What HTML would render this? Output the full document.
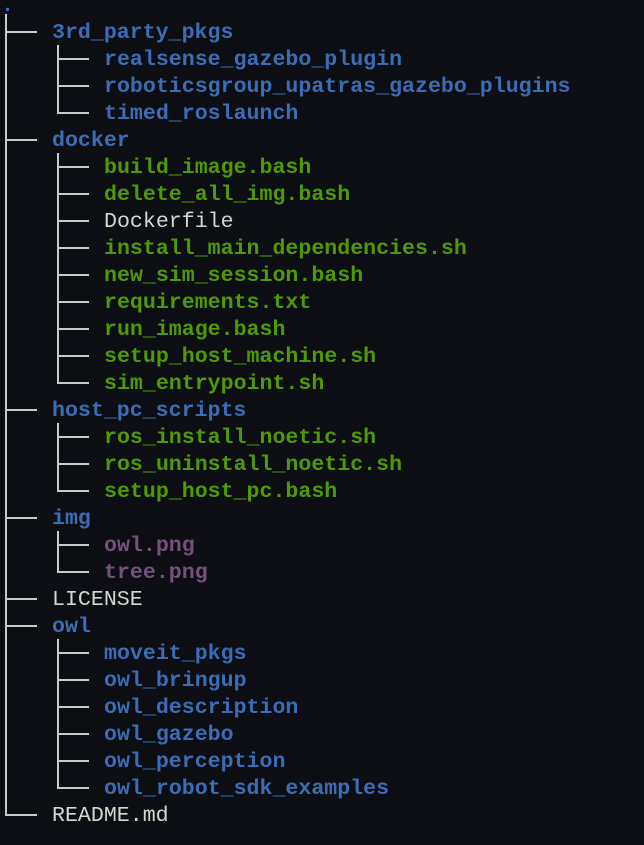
<!DOCTYPE html>
<html><head><meta charset="utf-8"><style>
html,body{margin:0;padding:0;background:#0c0e13;width:644px;height:845px;overflow:hidden}
body{position:relative;font-family:"Liberation Mono",monospace;font-size:21.6px}
.r{position:absolute;height:27px;line-height:27px;white-space:pre;margin-top:1px}
.b{color:#3a6db5;font-weight:bold}
.g{color:#4e9a06;font-weight:bold}
.p{color:#75507b;font-weight:bold}
.w{color:#d3d7cf}
.h{position:absolute;height:2px;background:#c8cbc6;width:32px}
.v{position:absolute;width:2px;background:#c8cbc6}
</style></head><body>
<div class="r b" style="left:1px;top:-8px">.</div>
<div class="v" style="left:5px;top:14px;height:802px"></div>
<div class="v" style="left:57px;top:45px;height:68px"></div>
<div class="v" style="left:57px;top:153px;height:231px"></div>
<div class="v" style="left:57px;top:423px;height:69px"></div>
<div class="v" style="left:57px;top:531px;height:42px"></div>
<div class="v" style="left:57px;top:639px;height:150px"></div>
<div class="r b" style="left:52px;top:19px">3rd_party_pkgs</div>
<div class="r b" style="left:104px;top:46px">realsense_gazebo_plugin</div>
<div class="r b" style="left:104px;top:73px">roboticsgroup_upatras_gazebo_plugins</div>
<div class="r b" style="left:104px;top:100px">timed_roslaunch</div>
<div class="r b" style="left:52px;top:127px">docker</div>
<div class="r g" style="left:104px;top:154px">build_image.bash</div>
<div class="r g" style="left:104px;top:181px">delete_all_img.bash</div>
<div class="r w" style="left:104px;top:208px">Dockerfile</div>
<div class="r g" style="left:104px;top:235px">install_main_dependencies.sh</div>
<div class="r g" style="left:104px;top:262px">new_sim_session.bash</div>
<div class="r g" style="left:104px;top:289px">requirements.txt</div>
<div class="r g" style="left:104px;top:316px">run_image.bash</div>
<div class="r g" style="left:104px;top:343px">setup_host_machine.sh</div>
<div class="r g" style="left:104px;top:370px">sim_entrypoint.sh</div>
<div class="r b" style="left:52px;top:397px">host_pc_scripts</div>
<div class="r g" style="left:104px;top:424px">ros_install_noetic.sh</div>
<div class="r g" style="left:104px;top:451px">ros_uninstall_noetic.sh</div>
<div class="r g" style="left:104px;top:478px">setup_host_pc.bash</div>
<div class="r b" style="left:52px;top:505px">img</div>
<div class="r p" style="left:104px;top:532px">owl.png</div>
<div class="r p" style="left:104px;top:559px">tree.png</div>
<div class="r w" style="left:52px;top:586px">LICENSE</div>
<div class="r b" style="left:52px;top:613px">owl</div>
<div class="r b" style="left:104px;top:640px">moveit_pkgs</div>
<div class="r b" style="left:104px;top:667px">owl_bringup</div>
<div class="r b" style="left:104px;top:694px">owl_description</div>
<div class="r b" style="left:104px;top:721px">owl_gazebo</div>
<div class="r b" style="left:104px;top:748px">owl_perception</div>
<div class="r b" style="left:104px;top:775px">owl_robot_sdk_examples</div>
<div class="r w" style="left:52px;top:802px">README.md</div>
<div class="h" style="left:5px;top:31px"></div>
<div class="h" style="left:5px;top:139px"></div>
<div class="h" style="left:5px;top:409px"></div>
<div class="h" style="left:5px;top:517px"></div>
<div class="h" style="left:5px;top:598px"></div>
<div class="h" style="left:5px;top:625px"></div>
<div class="h" style="left:5px;top:814px"></div>
<div class="h" style="left:57px;top:58px"></div>
<div class="h" style="left:57px;top:85px"></div>
<div class="h" style="left:57px;top:112px"></div>
<div class="h" style="left:57px;top:166px"></div>
<div class="h" style="left:57px;top:193px"></div>
<div class="h" style="left:57px;top:220px"></div>
<div class="h" style="left:57px;top:247px"></div>
<div class="h" style="left:57px;top:274px"></div>
<div class="h" style="left:57px;top:301px"></div>
<div class="h" style="left:57px;top:328px"></div>
<div class="h" style="left:57px;top:355px"></div>
<div class="h" style="left:57px;top:382px"></div>
<div class="h" style="left:57px;top:436px"></div>
<div class="h" style="left:57px;top:463px"></div>
<div class="h" style="left:57px;top:490px"></div>
<div class="h" style="left:57px;top:544px"></div>
<div class="h" style="left:57px;top:571px"></div>
<div class="h" style="left:57px;top:652px"></div>
<div class="h" style="left:57px;top:679px"></div>
<div class="h" style="left:57px;top:706px"></div>
<div class="h" style="left:57px;top:733px"></div>
<div class="h" style="left:57px;top:760px"></div>
<div class="h" style="left:57px;top:787px"></div>
</body></html>
